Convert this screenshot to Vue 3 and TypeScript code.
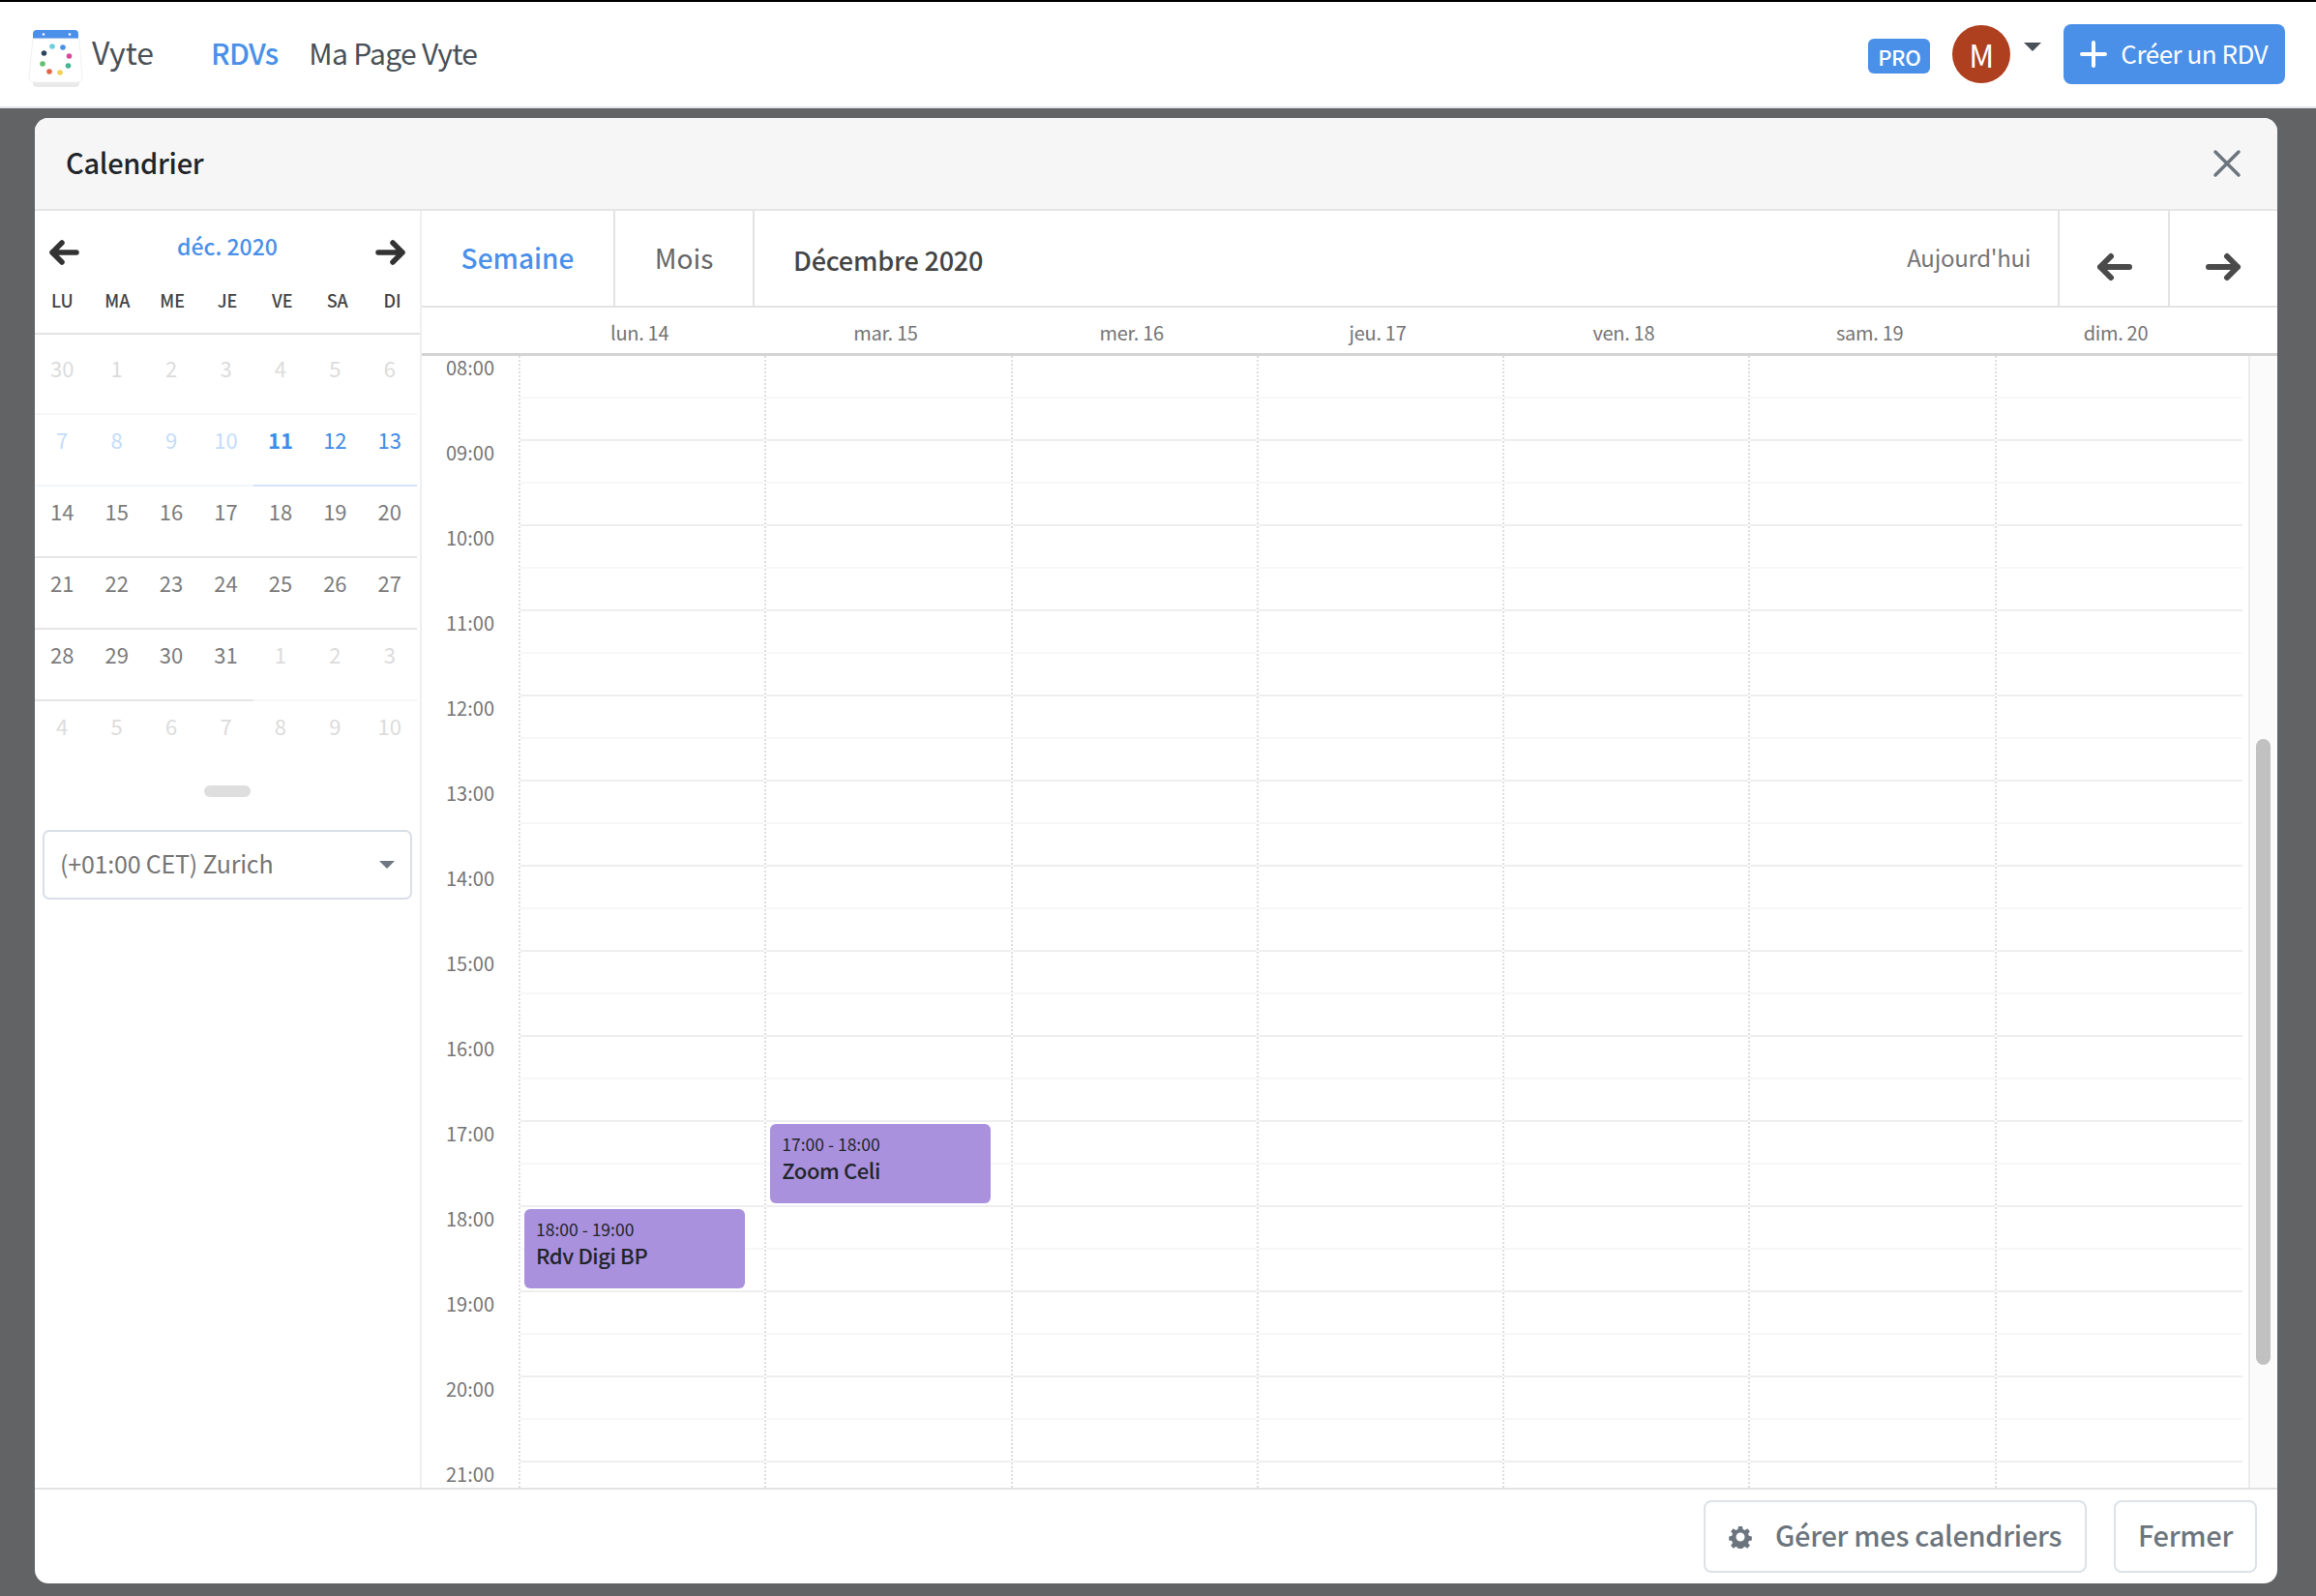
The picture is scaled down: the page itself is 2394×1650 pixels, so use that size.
<script setup lang="ts">
type Cell = { n: number; kind: string; line: string }

const weekdays = ['LU', 'MA', 'ME', 'JE', 'VE', 'SA', 'DI']
const days = ['lun. 14', 'mar. 15', 'mer. 16', 'jeu. 17', 'ven. 18', 'sam. 19', 'dim. 20']
const hours = ['08:00', '09:00', '10:00', '11:00', '12:00', '13:00', '14:00', '15:00', '16:00', '17:00', '18:00', '19:00', '20:00', '21:00']

const HOUR_H = 88
const events = [
  { day: 1, start: 17, time: '17:00 - 18:00', title: 'Zoom Celi' },
  { day: 0, start: 18, time: '18:00 - 19:00', title: 'Rdv Digi BP' },
]

const dots = [
  { x: 53, y: 50, c: '#6fcde0' },
  { x: 64, y: 51, c: '#4a8fe8' },
  { x: 70.5, y: 60, c: '#d9499b' },
  { x: 69.5, y: 70, c: '#43b58f' },
  { x: 61, y: 77, c: '#f2cf55' },
  { x: 50, y: 76, c: '#e0664a' },
  { x: 43, y: 68, c: '#62c072' },
  { x: 44.5, y: 57, c: '#2f4460' },
]

function row(nums: number[], kinds: string[], lines: string[]): Cell[] {
  return nums.map((n, i) => ({ n, kind: kinds[i], line: lines[i] }))
}
const rep = (v: string, c: number) => Array(c).fill(v) as string[]

const weeks: Cell[][] = [
  row([30, 1, 2, 3, 4, 5, 6], rep('off', 7), rep('l-faint', 7)),
  row([7, 8, 9, 10, 11, 12, 13], [...rep('pale', 4), 'today', 'sel', 'sel'], [...rep('l-paleblue', 4), ...rep('l-blue', 3)]),
  row([14, 15, 16, 17, 18, 19, 20], rep('cur', 7), rep('l-grey', 7)),
  row([21, 22, 23, 24, 25, 26, 27], rep('cur', 7), rep('l-grey', 7)),
  row([28, 29, 30, 31, 1, 2, 3], [...rep('cur', 4), ...rep('off', 3)], [...rep('l-grey', 4), ...rep('l-faint', 3)]),
  row([4, 5, 6, 7, 8, 9, 10], rep('off', 7), rep('l-none', 7)),
]
</script>

<template>
  <div class="page">
    <header class="nav">
      <svg class="logo" viewBox="28 30 58 64" width="58" height="64">
        <path d="M33 43v-6a4 4 0 0 1 4-4h39a4 4 0 0 1 4 4v6z" fill="#4a8fe8" />
        <circle cx="44" cy="37.5" r="1.3" fill="#fff" />
        <circle cx="71" cy="37.5" r="1.3" fill="#fff" />
        <path d="M33 86h48v2a4 4 0 0 1-4 4H37a4 4 0 0 1-4-4z" fill="#e9e9e9" />
        <path d="M33 42h48l3 40a5 5 0 0 1-5 5H34a5 5 0 0 1-5-5z" fill="#fff" stroke="#f1f1f1" stroke-width="1" />
        <circle v-for="d in dots" :key="d.c" :cx="d.x" :cy="d.y" r="2.8" :fill="d.c" />
      </svg>
      <span class="brand">Vyte</span>
      <a class="nav-link active">RDVs</a>
      <a class="nav-link">Ma Page Vyte</a>
      <div class="nav-right">
        <span class="pro">PRO</span>
        <span class="avatar">M</span>
        <span class="caret"></span>
        <button class="create">
          <svg width="28" height="28" viewBox="0 0 28 28"><path d="M14 2v24M2 14h24" stroke="#fff" stroke-width="4" stroke-linecap="round" /></svg>
          <span class="create-label">Créer un RDV</span>
        </button>
      </div>
    </header>

    <main class="backdrop">
      <section class="modal">
        <div class="modal-head">
          <h1>Calendrier</h1>
          <svg class="close-x" width="30" height="30" viewBox="0 0 30 30"><path d="M3 3l24 24M27 3L3 27" stroke="#6c757d" stroke-width="3.5" stroke-linecap="round" /></svg>
        </div>

        <div class="modal-body">
          <aside class="side">
            <div class="mini-nav">
              <svg class="mini-arrow" width="32" height="28" viewBox="0 0 32 28"><path d="M29 14H4M14 4L4 14l10 10" fill="none" stroke="#333" stroke-width="5.5" stroke-linecap="round" stroke-linejoin="round" /></svg>
              <span class="month">déc. 2020</span>
              <svg class="mini-arrow" width="32" height="28" viewBox="0 0 32 28"><path d="M3 14h25M18 4l10 10-10 10" fill="none" stroke="#333" stroke-width="5.5" stroke-linecap="round" stroke-linejoin="round" /></svg>
            </div>
            <div class="weekdays">
              <span v-for="w in weekdays" :key="w">{{ w }}</span>
            </div>
            <div class="weeks">
              <div v-for="(week, i) in weeks" :key="i" class="week">
                <span v-for="c in week" :key="c.n" class="cell" :class="[c.kind, c.line]">{{ c.n }}</span>
              </div>
            </div>
            <div class="handle"></div>
            <div class="tz">
              <span class="tz-label">(+01:00 CET) Zurich</span>
              <span class="tz-caret"></span>
            </div>
          </aside>

          <div class="cal">
            <div class="toolbar">
              <span class="tab current">Semaine</span>
              <span class="tab">Mois</span>
              <span class="period">Décembre 2020</span>
              <span class="today-btn">Aujourd'hui</span>
              <span class="tool-arrow">
                <svg width="38" height="32" viewBox="0 0 38 32"><path d="M35 16H5M16 5L5 16l11 11" fill="none" stroke="#4a4a4a" stroke-width="6" stroke-linecap="round" stroke-linejoin="round" /></svg>
              </span>
              <span class="tool-arrow">
                <svg width="38" height="32" viewBox="0 0 38 32"><path d="M3 16h30M22 5l11 11-11 11" fill="none" stroke="#4a4a4a" stroke-width="6" stroke-linecap="round" stroke-linejoin="round" /></svg>
              </span>
            </div>
            <div class="day-head">
              <span v-for="d in days" :key="d">{{ d }}</span>
            </div>
            <div class="grid">
              <div class="gutter">
                <div v-for="h in hours" :key="h" class="hour">{{ h }}</div>
              </div>
              <div v-for="(d, di) in days" :key="d" class="col">
                <div v-for="h in hours" :key="h" class="slot"><div class="half"></div></div>
                <template v-for="e in events" :key="e.title">
                  <div
                    v-if="e.day === di"
                    class="event"
                    :style="{ top: (e.start - 8) * HOUR_H + 2 + 'px' }"
                  >
                    <div class="ev-time">{{ e.time }}</div>
                    <div class="ev-title">{{ e.title }}</div>
                  </div>
                </template>
              </div>
              <div class="track"><div class="thumb"></div></div>
            </div>
          </div>
        </div>

        <footer class="modal-foot">
          <button class="ghost">
            <svg width="24" height="24" viewBox="0 0 24 24">
              <path fill="#6c757d" fill-rule="evenodd" d="M10 1h4l.6 3 2.1.9 2.6-1.7 2.6 3-1.9 2.4.8 2.2 3 .7v3.9l-3 .7-.8 2.2 1.9 2.4-2.6 3-2.6-1.7-2.1.9-.6 3h-4l-.6-3-2.1-.9-2.6 1.7-2.6-3 1.9-2.4-.8-2.2-3-.7v-3.9l3-.7.8-2.2-1.9-2.4 2.6-3 2.6 1.7 2.1-.9zM12 7.5a4.5 4.5 0 1 0 0 9 4.5 4.5 0 0 0 0-9z" />
            </svg>
            <span class="ghost-label">Gérer mes calendriers</span>
          </button>
          <button class="ghost close"><span class="ghost-label">Fermer</span></button>
        </footer>
      </section>
    </main>
  </div>
</template>

<style>
html, body { margin: 0; overflow: hidden; }
</style>

<style scoped>
.page {
  width: 2394px;
  height: 1650px;
  display: flex;
  flex-direction: column;
  font-family: "Noto Sans CJK SC", "Noto Sans", sans-serif;
  color: #757575;
}
.nav {
  height: 112px;
  box-sizing: border-box;
  flex: none;
  display: flex;
  align-items: center;
  background: #fff;
  border-top: 2px solid #000;
  border-bottom: 2px solid #e2e6ea;
  padding: 0 32px 0 30px;
}
.logo { flex: none; margin: 8px 0 0 -1px; }
.brand {
  font-size: 32px;
  line-height: 48px;
  color: #495057;
  margin: -6px 59px 0 8px;
}
.nav-link {
  font-size: 30px;
  line-height: 48px;
  letter-spacing: -0.7px;
  color: #495057;
  margin: -5px 32px 0 0;
}
.nav-link.active { color: #4a90e9; font-weight: 500; }
.nav-right { margin-left: auto; display: flex; align-items: center; }
.pro {
  width: 64px;
  height: 36px;
  background: #4a90e9;
  color: #fff;
  border-radius: 6px;
  font-size: 22px;
  letter-spacing: -0.3px;
  font-weight: 500;
  line-height: 36px;
  text-align: center;
  margin-top: 3px;
}
.avatar {
  width: 60px;
  height: 60px;
  border-radius: 50%;
  background: #ae3f1f;
  color: #fff;
  font-size: 32px;
  line-height: 60px;
  text-align: center;
  margin-left: 23px;
}
.caret {
  width: 0;
  height: 0;
  border-left: 9px solid transparent;
  border-right: 9px solid transparent;
  border-top: 9px solid #495057;
  margin: -15px 0 0 14px;
}
.create {
  display: flex;
  align-items: center;
  gap: 14px;
  height: 62px;
  margin-left: 23px;
  padding: 0 18px 0 17px;
  border: 0;
  border-radius: 8px;
  background: #4a90e9;
  color: #fff;
  font: inherit;
  font-size: 26px;
  letter-spacing: -0.5px;
}
.create-label { margin-top: -4px; }
.backdrop {
  flex: 1;
  min-height: 0;
  display: flex;
  background: #626365;
  padding: 10px 40px 13px 36px;
}
.modal {
  flex: 1;
  display: flex;
  flex-direction: column;
  background: #fff;
  border-radius: 14px;
  overflow: hidden;
}
.modal-head {
  height: 96px;
  flex: none;
  box-sizing: border-box;
  background: #f6f6f6;
  border-bottom: 2px solid #e5e5e5;
  display: flex;
  align-items: center;
  justify-content: space-between;
  padding: 0 37px 4px 32px;
}
.close-x { margin-top: 3px; }
.modal-head h1 {
  margin: 0;
  font-size: 29px;
  letter-spacing: -0.3px;
  line-height: 40px;
  font-weight: 500;
  color: #212529;
}
.modal-body { flex: 1; min-height: 0; display: flex; }
.side {
  width: 400px;
  flex: none;
  box-sizing: border-box;
  border-right: 2px solid #efefef;
}
.mini-nav {
  height: 81px;
  box-sizing: border-box;
  display: flex;
  align-items: flex-start;
  justify-content: space-between;
  padding: 20px 14px 0 14px;
}
.mini-arrow { margin-top: 9px; }
.month {
  font-size: 23px;
  line-height: 32px;
  font-weight: 500;
  color: #4a90e9;
}
.weekdays {
  display: grid;
  grid-template-columns: repeat(7, 1fr);
  width: 398px;
  height: 47px;
  box-sizing: border-box;
  border-bottom: 2px solid #e3e3e3;
  font-size: 18px;
  line-height: 22px;
  font-weight: 500;
  color: #444;
  text-align: center;
}
.weeks { margin-top: 9px; width: 395px; }
.week { display: grid; grid-template-columns: repeat(7, 1fr); }
.cell {
  height: 74px;
  box-sizing: border-box;
  line-height: 50px;
  font-size: 22px;
  text-align: center;
  border-bottom: 2px solid transparent;
}
.off { color: #dcdcdc; }
.pale { color: #c5dcf9; }
.cur { color: #7c7c7c; }
.sel { color: #3f8ce8; }
.today { color: #3f8ce8; font-weight: 700; }
.l-faint { border-color: #f7f7f7; }
.l-paleblue { border-color: #f1f6fd; }
.l-blue { border-color: #d3e4fa; }
.l-grey { border-color: #e6e6e6; }
.l-none { border-color: transparent; }
.handle {
  width: 48px;
  height: 12px;
  border-radius: 6px;
  background: #dedede;
  margin: 13px auto 0;
}
.tz {
  margin: 34px 0 0 8px;
  width: 382px;
  height: 72px;
  box-sizing: border-box;
  border: 2px solid #d9dfe6;
  border-radius: 7px;
  display: flex;
  align-items: center;
  justify-content: space-between;
  padding: 0 16px;
  font-size: 25px;
  letter-spacing: -0.2px;
  color: #757575;
}
.tz-label { margin-top: -4px; }
.tz-caret {
  width: 0;
  height: 0;
  border-left: 8px solid transparent;
  border-right: 8px solid transparent;
  border-top: 8px solid #6f7780;
}
.cal { flex: 1; min-width: 0; display: flex; flex-direction: column; }
.toolbar {
  height: 100px;
  flex: none;
  box-sizing: border-box;
  display: flex;
  align-items: stretch;
  border-bottom: 2px solid #e3e3e3;
}
.tab {
  display: flex;
  align-items: center;
  justify-content: center;
  box-sizing: border-box;
  height: 98px;
  padding-bottom: 2px;
  font-size: 28px;
  color: #666;
  border-right: 2px solid #e3e3e3;
}
.tab:first-child { width: 200px; }
.tab:nth-child(2) { width: 144px; }
.tab.current { color: #4a90e9; font-weight: 500; }
.period {
  display: flex;
  align-items: center;
  margin-left: 40px;
  padding-top: 2px;
  font-size: 27px;
  letter-spacing: -0.2px;
  font-weight: 500;
  color: #444;
}
.today-btn {
  margin-left: auto;
  display: flex;
  align-items: center;
  padding: 0 28px 4px 0;
  font-size: 24px;
  letter-spacing: -0.3px;
  color: #757575;
}
.tool-arrow {
  width: 114px;
  box-sizing: border-box;
  border-left: 2px solid #e3e3e3;
  display: flex;
  align-items: center;
  justify-content: center;
  padding-top: 18px;
}
.tool-arrow:last-child { width: 113px; }
.day-head {
  height: 50px;
  flex: none;
  box-sizing: border-box;
  display: grid;
  grid-template-columns: repeat(7, 254.3px);
  padding: 3px 0 0 98px;
  border-bottom: 3px solid #d4d4d4;
  font-size: 20px;
  letter-spacing: -0.3px;
  line-height: 45px;
  text-align: center;
}
.grid {
  flex: 1;
  min-height: 0;
  display: flex;
  overflow: hidden;
  margin-top: -4px;
  padding-top: 4px;
}
.gutter { width: 100px; flex: none; }
.hour {
  height: 88px;
  font-size: 20px;
  line-height: 23px;
  text-align: center;
}
.col {
  width: 254.3px;
  flex: none;
  box-sizing: border-box;
  position: relative;
  border-left: 2px dotted #dedede;
}
.col:nth-last-child(2) { width: 256.2px; }
.slot {
  height: 88px;
  box-sizing: border-box;
  border-bottom: 2px solid #eeeeee;
}
.half { height: 44px; box-sizing: border-box; border-bottom: 2px solid #f7f7f7; }
.event {
  position: absolute;
  left: 4px;
  width: 228px;
  height: 82px;
  box-sizing: border-box;
  padding: 9px 12px;
  background: #aa91de;
  border-radius: 6px;
  color: #212529;
}
.ev-time { font-size: 17.5px; line-height: 24px; }
.ev-title { font-size: 22px; letter-spacing: -0.4px; line-height: 28px; font-weight: 500; }
.track {
  flex: 1;
  margin-left: 6px;
  border-left: 2px solid #ececec;
  background: #fbfbfb;
}
.thumb {
  width: 15px;
  height: 647px;
  margin: 396px 0 0 6px;
  border-radius: 8px;
  background: #c1c1c1;
}
.modal-foot {
  height: 99px;
  flex: none;
  box-sizing: border-box;
  border-top: 2px solid #e3e3e3;
  display: flex;
  align-items: center;
  justify-content: flex-end;
  gap: 28px;
  padding: 0 21px 0 0;
}
.ghost {
  height: 75px;
  display: flex;
  align-items: center;
  gap: 24px;
  box-sizing: border-box;
  padding: 0 24px;
  background: #fff;
  border: 2px solid #dde2e8;
  border-radius: 8px;
  font: inherit;
  font-size: 29px;
  letter-spacing: -0.3px;
  font-weight: 500;
  color: #6c757d;
}
.ghost-label { margin-top: -5px; }
.ghost.close { width: 148px; justify-content: center; padding: 0; }
</style>
